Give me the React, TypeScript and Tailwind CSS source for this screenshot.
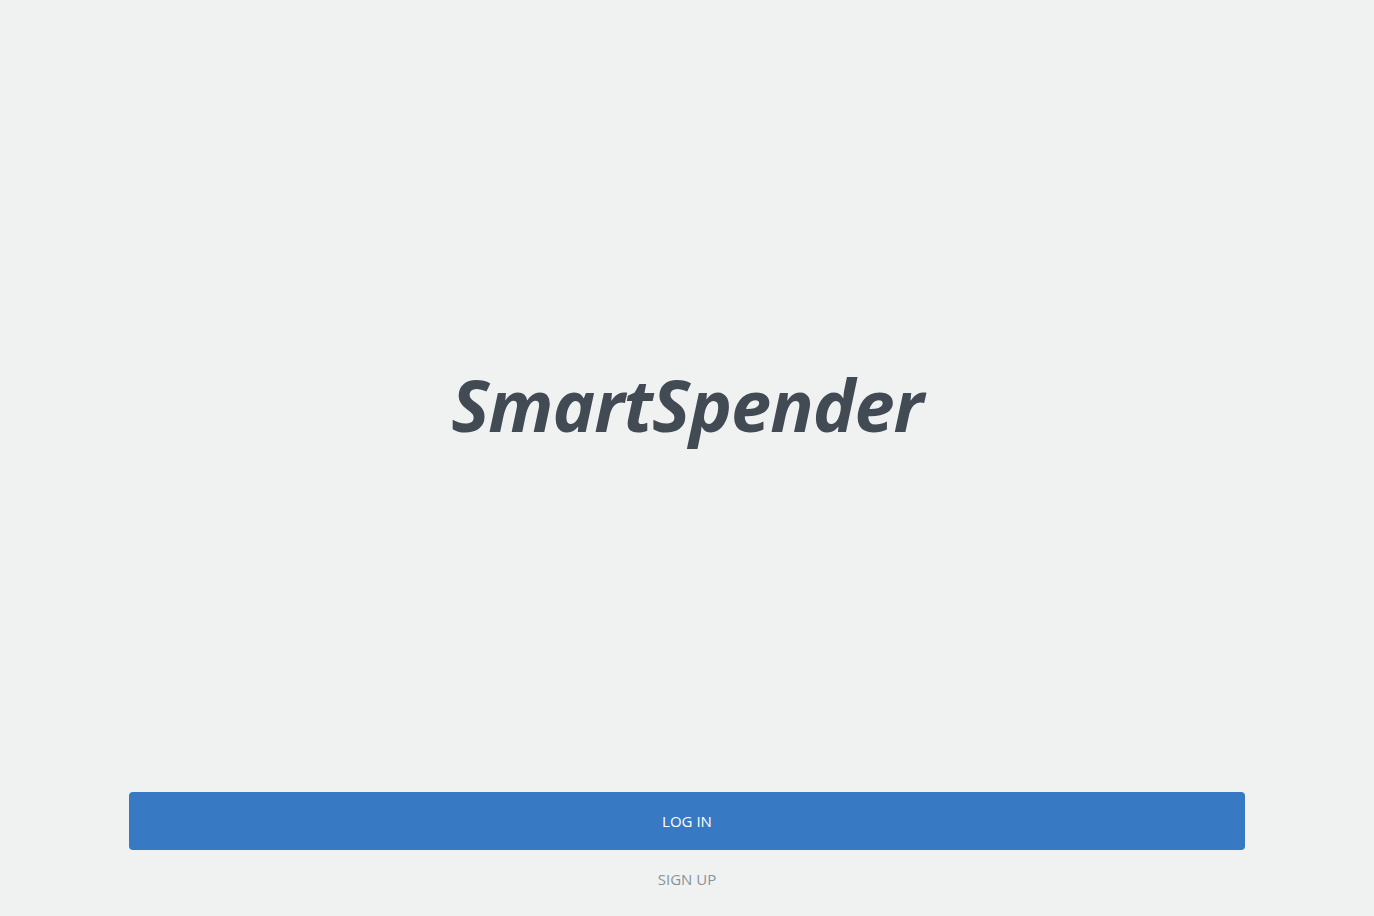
export default function App() {
  return (
    <div
      className="flex h-screen flex-col bg-[#f0f2f2] px-[129px]"
      style={{ fontFamily: '"Open Sans", "Noto Sans", sans-serif' }}
    >
      <div className="flex flex-1 items-center justify-center pt-[16px]">
        <h1 className="text-[72px] leading-none font-bold italic tracking-[-1px] text-[#424a54]">
          SmartSpender
        </h1>
      </div>
      <button
        type="button"
        className="h-[58px] w-full rounded-[4px] bg-[#3779c2] text-[15px] text-white"
      >
        LOG IN
      </button>
      <button
        type="button"
        className="mt-[19px] mb-[27px] self-center text-[15px] leading-5 text-[#8a9199]"
      >
        SIGN UP
      </button>
    </div>
  );
}
